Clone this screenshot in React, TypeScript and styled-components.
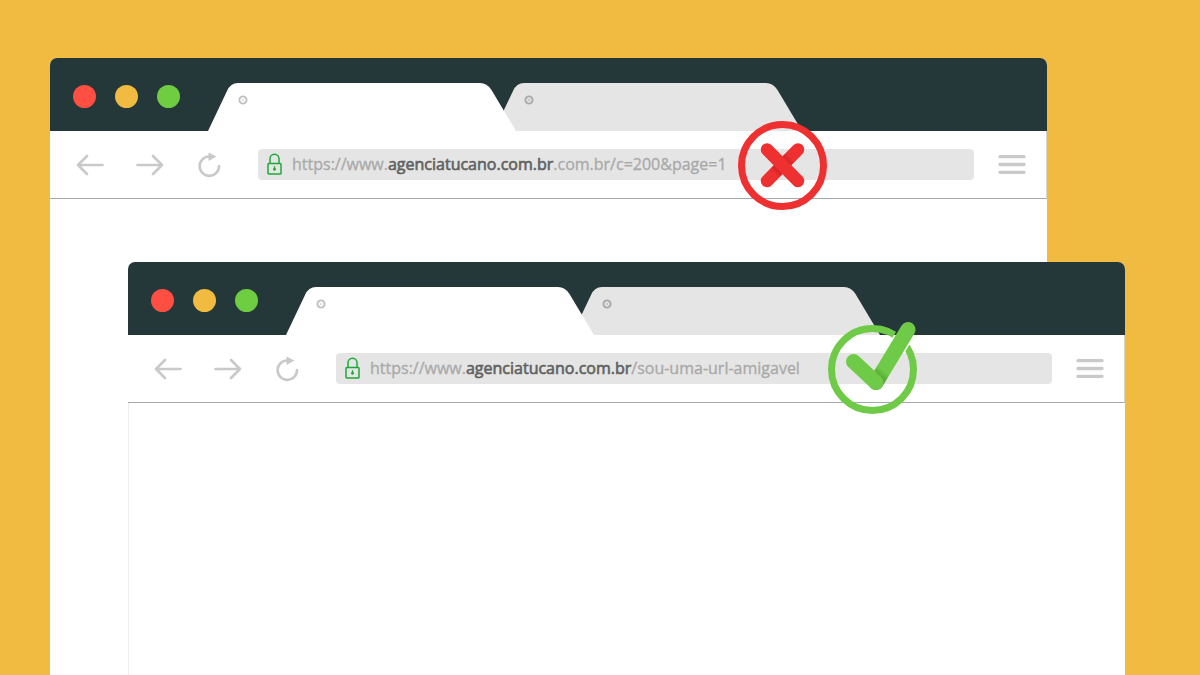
import React, { useId } from "react";
import styled, { createGlobalStyle } from "styled-components";

const GlobalStyle = createGlobalStyle`
  *, *::before, *::after { box-sizing: border-box; }
  body {
    margin: 0;
    background: #f0bb40;
    font-family: "Open Sans", "Noto Sans", sans-serif;
  }
  button {
    border: 0;
    padding: 0;
    background: none;
    cursor: pointer;
  }
  svg { display: block; }
`;

const Desktop = styled.main`
  display: grid;
  min-height: 100vh;
  padding: 58px 75px 0 50px;
`;

const Window = styled.section<{ $front?: boolean }>`
  grid-area: 1 / 1;
  display: flex;
  flex-direction: column;
  min-width: 0;
  margin: ${(p) => (p.$front ? "204px 0 0 78px" : "0 78px 0 0")};
  border-radius: 7px 7px 0 0;
  background: #fff;
`;

const TitleBar = styled.header`
  display: flex;
  align-items: center;
  gap: 28px;
  height: 73px;
  padding: 4px 23px 0;
  border-radius: 7px 7px 0 0;
  background: #243739;
`;

const Lights = styled.div`
  display: flex;
  gap: 19px;
`;

const Light = styled.button<{ $color: string }>`
  width: 23px;
  height: 23px;
  border-radius: 50%;
  background: ${(p) => p.$color};
`;

const Tabs = styled.div`
  display: flex;
  align-self: flex-end;
`;

const Tab = styled.div<{ $active?: boolean }>`
  display: grid;
  width: 308px;
  height: 48px;
  color: ${(p) => (p.$active ? "#fff" : "#e5e5e5")};
  z-index: ${(p) => (p.$active ? 1 : 0)};

  & + & {
    margin-left: -22px;
  }
  & > * {
    grid-area: 1 / 1;
  }
`;

const TabClose = styled.button<{ $active?: boolean }>`
  width: 10px;
  height: 10px;
  margin: 12px 0 0 30px;
  color: ${(p) => (p.$active ? "#c0c0c0" : "#a9a9a9")};
`;

const Toolbar = styled.div`
  display: flex;
  align-items: center;
  gap: 24px;
  height: 68px;
  padding: 0 20px 0 26px;
  border-right: 1px solid #d9d5ca;
  border-bottom: 1px solid #a3a8a8;
`;

const Nav = styled.nav`
  display: flex;
  gap: 32px;
  padding-right: 10px;
`;

const IconButton = styled.button`
  display: grid;
  place-items: center;
  width: 28px;
  height: 28px;
  color: #c9c9c9;
`;

const AddressBar = styled.div`
  position: relative;
  display: flex;
  flex: 1;
  align-items: center;
  gap: 10px;
  height: 31px;
  min-width: 0;
  padding: 0 9px 1px;
  border-radius: 4px;
  background: #e5e5e5;
`;

const Url = styled.div`
  color: #a9a9a9;
  font-size: 16px;
  line-height: 22px;
  font-weight: 400;
  white-space: nowrap;
  outline: none;
  -webkit-text-stroke: 0.02em currentColor;
`;

const Domain = styled.span`
  color: #626262;
  -webkit-text-stroke: 0.04em currentColor;
`;

const Badge = styled.span<{ $left: number }>`
  position: absolute;
  top: -28px;
  left: ${(p) => p.$left}px;
  z-index: 2;
`;

const Page = styled.div<{ $edge?: boolean }>`
  flex: 1;
  border-left: 1px solid ${(p) => (p.$edge ? "#eeeeee" : "#fff")};
`;

const TabShape = () => (
  <svg width="308" height="48" viewBox="0 0 308 48" aria-hidden="true">
    <path
      fill="currentColor"
      d="M0 48 L19 8 Q22.500 0 30 0 H272 Q279 0 283.500 7 L308 48 Z"
    />
  </svg>
);

const CloseIcon = () => (
  <svg width="10" height="10" viewBox="0 0 10 10" aria-hidden="true">
    <circle cx="5" cy="5" r="3.600" fill="none" stroke="currentColor" strokeWidth="1.900" />
    <path d="M3.200 3.200 6.800 6.800M6.800 3.200 3.200 6.800" stroke="currentColor" strokeWidth=".5" />
  </svg>
);

const ArrowIcon = ({ forward }: { forward?: boolean }) => (
  <svg width="28" height="22" viewBox="0 0 28 22" fill="none" stroke="currentColor" strokeWidth="2.700" strokeLinecap="round" strokeLinejoin="round" aria-hidden="true">
    <path d={forward ? "M1.500 11H26M17 2 26 11 17 20" : "M26.500 11H2M11 2 2 11 11 20"} />
  </svg>
);

const ReloadIcon = () => (
  <svg width="28" height="28" viewBox="0 0 28 28" fill="none" aria-hidden="true">
    <path d="M23 15A9.700 9.700 0 1 1 13.300 5.500H15" stroke="currentColor" strokeWidth="2.600" strokeLinecap="round" />
    <path d="M12.500 1.500 20.500 5.500 12.500 10Z" fill="currentColor" />
  </svg>
);

const MenuIcon = () => (
  <svg width="28" height="20" viewBox="0 0 28 20" stroke="currentColor" strokeWidth="3.300" strokeLinecap="round" aria-hidden="true">
    <path d="M2 1.700H26M2 9.500H26M2 17.300H26" />
  </svg>
);

const LockIcon = () => (
  <svg width="15" height="22" viewBox="0 0 15 22" fill="none" stroke="#1fa83a" strokeWidth="1.500" aria-hidden="true">
    <rect x="1" y="10.500" width="13" height="10.500" rx=".8" />
    <path d="M3 10.500V5.800a4.500 4.500 0 0 1 9 0V10.500" />
    <path d="M7.500 13.200V17.500" strokeWidth="1.200" />
    <circle cx="7.500" cy="16.200" r="1.400" fill="#1fa83a" stroke="none" />
  </svg>
);

const CrossMark = () => {
  const shade = useId();
  return (
    <svg width="89" height="89" viewBox="0 0 89 89" fill="none" role="img" aria-label="Incorrect">
      <defs>
        <linearGradient id={shade} gradientUnits="userSpaceOnUse" x1="31" y1="58" x2="58" y2="31">
          <stop offset="0.2" stopColor="#ef3030" />
          <stop offset="0.4" stopColor="#c42020" />
          <stop offset="0.6" stopColor="#c42020" />
          <stop offset="0.8" stopColor="#ef3030" />
        </linearGradient>
      </defs>
      <circle cx="44.500" cy="44.500" r="41" stroke="#ef3030" strokeWidth="7" />
      <path d="M29 60 60 28.500" stroke={`url(#${shade})`} strokeWidth="12.500" strokeLinecap="round" />
      <path d="M29 28.500 60 60" stroke="#ef3030" strokeWidth="12.500" strokeLinecap="round" />
    </svg>
  );
};

const CheckMark = () => {
  const shade = useId();
  const gap = useId();
  return (
    <svg width="89" height="89" viewBox="0 0 89 89" fill="none" overflow="visible" role="img" aria-label="Correct">
      <defs>
        <linearGradient id={shade} gradientUnits="userSpaceOnUse" x1="48" y1="57" x2="58" y2="45">
          <stop offset="0.2" stopColor="#4f9a30" />
          <stop offset="0.9" stopColor="#6fcb47" />
        </linearGradient>
        <mask id={gap} maskUnits="userSpaceOnUse" x="-2" y="-2" width="94" height="94">
          <rect x="-2" y="-2" width="94" height="94" fill="#fff" />
          <path d="M48 57.500 80 4.500" stroke="#000" strokeWidth="18" />
        </mask>
      </defs>
      <circle cx="44.500" cy="44.500" r="41" stroke="#6fcb47" strokeWidth="7" mask={`url(#${gap})`} />
      <path d="M48 57.500 80 4.500" stroke={`url(#${shade})`} strokeWidth="15" strokeLinecap="round" />
      <path d="M25.500 36.500 48 57.500" stroke="#6fcb47" strokeWidth="15" strokeLinecap="round" />
    </svg>
  );
};

type BrowserProps = {
  front?: boolean;
  path: string;
  badge: React.ReactNode;
  badgeLeft: number;
};

const Browser = ({ front, path, badge, badgeLeft }: BrowserProps) => (
  <Window $front={front} aria-label="Browser window">
    <TitleBar>
      <Lights>
        <Light $color="#ff4f42" aria-label="Close window" />
        <Light $color="#f0bb40" aria-label="Minimize window" />
        <Light $color="#6fcd42" aria-label="Maximize window" />
      </Lights>
      <Tabs>
        {[true, false].map((active) => (
          <Tab key={String(active)} $active={active}>
            <TabShape />
            <TabClose $active={active} aria-label="Close tab">
              <CloseIcon />
            </TabClose>
          </Tab>
        ))}
      </Tabs>
    </TitleBar>
    <Toolbar>
      <Nav aria-label="History">
        <IconButton aria-label="Back"><ArrowIcon /></IconButton>
        <IconButton aria-label="Forward"><ArrowIcon forward /></IconButton>
        <IconButton aria-label="Reload"><ReloadIcon /></IconButton>
      </Nav>
      <AddressBar>
        <LockIcon />
        <Url role="textbox" aria-label="Address" contentEditable suppressContentEditableWarning spellCheck={false}>
          https://www.<Domain>agenciatucano.com.br</Domain>{path}
        </Url>
        <Badge $left={badgeLeft}>{badge}</Badge>
      </AddressBar>
      <IconButton aria-label="Menu"><MenuIcon /></IconButton>
    </Toolbar>
    <Page $edge={front} />
  </Window>
);

export default function App() {
  return (
    <>
      <GlobalStyle />
      <Desktop>
        <Browser path=".com.br/c=200&page=1" badge={<CrossMark />} badgeLeft={480} />
        <Browser front path="/sou-uma-url-amigavel" badge={<CheckMark />} badgeLeft={492} />
      </Desktop>
    </>
  );
}
